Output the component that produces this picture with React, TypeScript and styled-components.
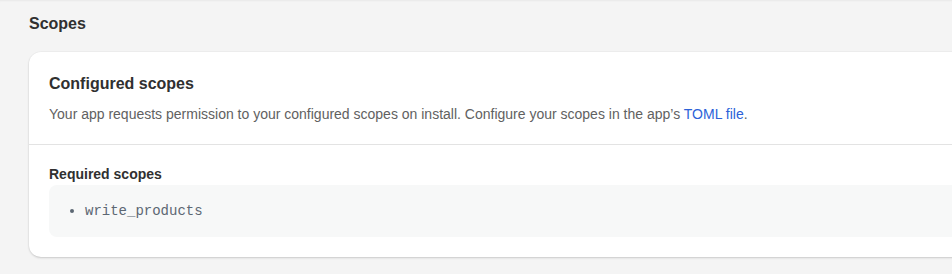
import React from "react";
import styled, { createGlobalStyle } from "styled-components";

const GlobalStyle = createGlobalStyle`
  html, body {
    margin: 0;
    padding: 0;
    background: #f4f4f4;
    overflow: hidden;
  }
  body {
    font-family: "Liberation Sans", Arial, sans-serif;
    color: #303030;
    -webkit-font-smoothing: antialiased;
  }
`;

const Page = styled.main`
  min-height: 274px;
  box-sizing: border-box;
  padding: 12px 0 0 29px;
  box-shadow: inset 0 2px 2px -1px rgba(0, 0, 0, 0.05);
`;

const PageTitle = styled.h2`
  margin: 0 0 16px;
  font-size: 16px;
  line-height: 24px;
  font-weight: 700;
  color: #303030;
`;

const Card = styled.section`
  width: 960px;
  background: #ffffff;
  border-radius: 12px;
  box-shadow: 0 1px 2px rgba(0, 0, 0, 0.1), 0 1px 3px rgba(0, 0, 0, 0.06),
    0 0 0 1px rgba(0, 0, 0, 0.02);
  overflow: hidden;
`;

const CardSection = styled.div<{ $divided?: boolean }>`
  padding: ${(p) => (p.$divided ? "19px" : "20px")} 20px 20px;
  border-top: ${(p) => (p.$divided ? "1px solid #e3e3e3" : "none")};
`;

const CardTitle = styled.h3`
  margin: 0 0 8px;
  font-size: 16px;
  line-height: 24px;
  font-weight: 700;
  color: #303030;
`;

const Description = styled.p`
  margin: 0;
  font-size: 14px;
  line-height: 20px;
  color: #616161;
`;

const Link = styled.a`
  color: #2c62d8;
  text-decoration: none;
`;

const SubTitle = styled.h4`
  margin: 0 0 1px;
  font-size: 14px;
  line-height: 20px;
  font-weight: 700;
  color: #303030;
`;

const CodeBox = styled.div`
  background: #f7f8f8;
  border-radius: 8px;
  padding: 16px;
`;

const ScopeList = styled.ul`
  margin: 0;
  padding: 0 0 0 20px;
  color: #5c6773;
`;

const ScopeItem = styled.li`
  font-family: "Liberation Mono", "Courier New", monospace;
  font-size: 14px;
  line-height: 20px;
  color: #5c6773;
`;

export default function App() {
  return (
    <>
      <GlobalStyle />
      <Page>
        <PageTitle>Scopes</PageTitle>
        <Card>
          <CardSection>
            <CardTitle>Configured scopes</CardTitle>
            <Description>
              Your app requests permission to your configured scopes on install. Configure your
              scopes in the app’s <Link href="#">TOML file</Link>.
            </Description>
          </CardSection>
          <CardSection $divided>
            <SubTitle>Required scopes</SubTitle>
            <CodeBox>
              <ScopeList>
                <ScopeItem>write_products</ScopeItem>
              </ScopeList>
            </CodeBox>
          </CardSection>
        </Card>
      </Page>
    </>
  );
}
